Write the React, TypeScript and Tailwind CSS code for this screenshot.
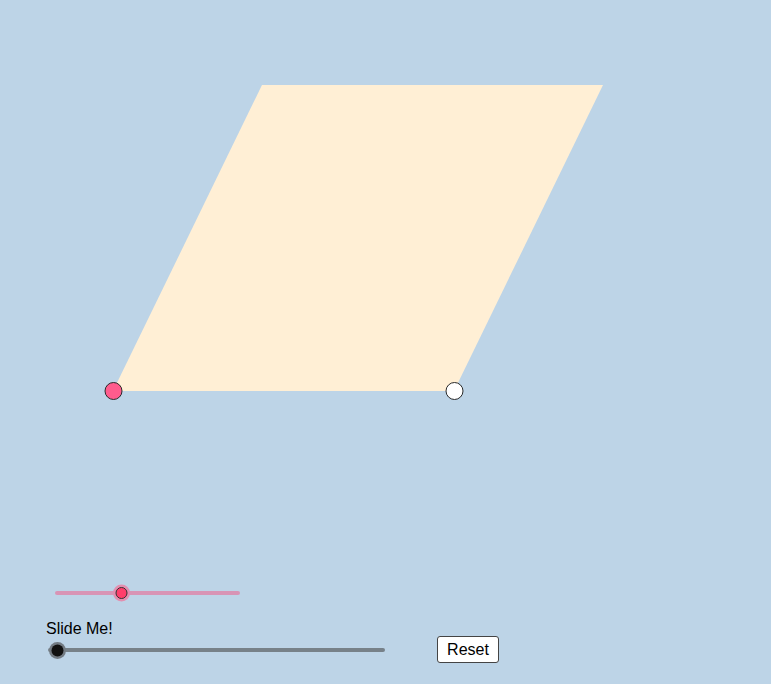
export default function App() {
  return (
    <div className="relative h-[684px] w-full overflow-hidden bg-[#bdd4e7] font-['Liberation_Sans',Arial,sans-serif]">
      <svg className="absolute left-0 top-0" width="771" height="684" viewBox="0 0 771 684">
        <polygon points="113,391 454,391 603,85 262,85" fill="#ffefd5" />
        <circle cx="113.5" cy="391" r="8.5" fill="#ff5c8d" stroke="#2a2a2a" strokeWidth="1" />
        <circle cx="454.5" cy="391" r="8.5" fill="#ffffff" stroke="#2a2a2a" strokeWidth="1" />
        {/* slider 1 */}
        <line x1="57" y1="593" x2="238" y2="593" stroke="#d894b5" strokeWidth="4" strokeLinecap="round" />
        <circle cx="121.5" cy="593" r="8.5" fill="#e38fb0" />
        <circle cx="121.5" cy="593" r="5.5" fill="#ff3f6b" stroke="#333" strokeWidth="1" />
        {/* slider 2 */}
        <line x1="50" y1="650" x2="383" y2="650" stroke="#778189" strokeWidth="4" strokeLinecap="round" />
        <circle cx="57.5" cy="650.5" r="8.5" fill="#737b83" />
        <circle cx="57.5" cy="650.5" r="6" fill="#111111" />
      </svg>
      <div className="absolute left-[46px] top-[619px] text-[16px] leading-[19px] text-black">Slide Me!</div>
      <button className="absolute left-[437px] top-[636px] flex h-[27px] w-[62px] items-center justify-center rounded-[3px] border border-[#444] bg-white text-[16px] text-black">
        Reset
      </button>
    </div>
  );
}
